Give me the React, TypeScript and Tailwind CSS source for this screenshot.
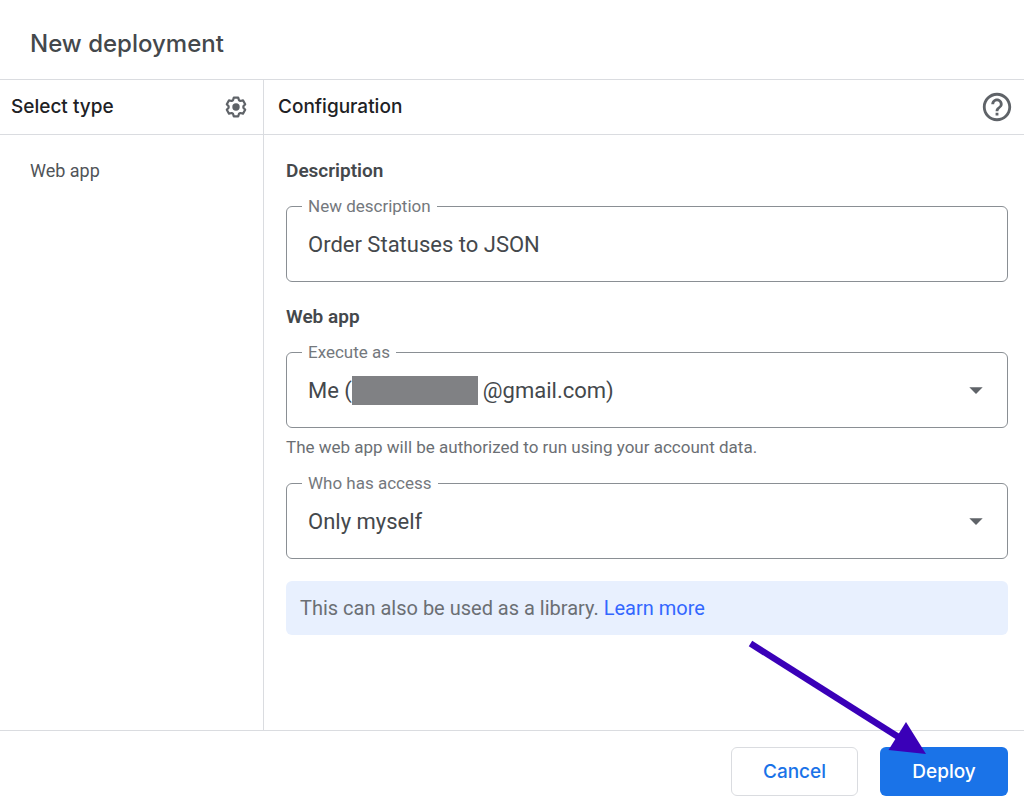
import { useState } from 'react';
import type { ReactNode } from 'react';
import { MdArrowDropDown, MdHelpOutline } from 'react-icons/md';

const account = `Me (${'\u00a0'.repeat(24)}@gmail.com)`;

interface FieldProps {
  id: string;
  label: string;
  children: ReactNode;
}

function Field({ id, label, children }: FieldProps) {
  return (
    <div className="relative h-[76px]">
      {children}
      <label htmlFor={id} className="absolute left-4 -top-3 bg-white px-1.5 text-[17px] leading-6 text-[#74787d]">
        {label}
      </label>
    </div>
  );
}

interface SelectFieldProps {
  id: string;
  label: string;
  options: string[];
  redacted?: boolean;
}

function SelectField({ id, label, options, redacted }: SelectFieldProps) {
  const [value, setValue] = useState(options[0]);

  return (
    <Field id={id} label={label}>
      <select
        id={id}
        value={value}
        onChange={(e) => setValue(e.target.value)}
        className="w-full h-full appearance-none rounded-md border border-[#8a8f94] bg-white px-[21px] text-[22px] text-[#44484c]"
      >
        {options.map((option) => (
          <option key={option}>{option}</option>
        ))}
      </select>
      {redacted && value === options[0] && (
        <span className="absolute left-[66px] top-6 h-[29px] w-[126px] bg-[#808184] pointer-events-none" />
      )}
      <MdArrowDropDown className="absolute right-4 top-[22px] w-8 h-8 text-[#5f6368] pointer-events-none" />
    </Field>
  );
}

function GearIcon() {
  return (
    <svg viewBox="-12 -12 24 24" className="w-6 h-6" aria-hidden="true">
      <path
        d="M-3-6.800-2.200-9.400H2.200L3-6.800 4.400-6 7-6.600 9.200-2.800 7.400-.8V.8L9.200 2.800 7 6.600 4.400 6 3 6.800 2.200 9.400H-2.200L-3 6.800-4.400 6-7 6.600-9.200 2.800-7.400.8V-.8L-9.200-2.800-7-6.600-4.400-6Z"
        fill="none"
        stroke="currentColor"
        strokeWidth="2.2"
        strokeLinejoin="round"
      />
      <circle r="3.7" fill="currentColor" />
    </svg>
  );
}

function PointerArrow() {
  return (
    <svg
      viewBox="0 0 178 114"
      className="absolute right-[82px] bottom-[42px] w-[178px] h-[114px] pointer-events-none"
      aria-hidden="true"
    >
      <path d="M2.5 3.5 152 98" stroke="#3a00b8" strokeWidth="6.5" />
      <path d="M158 82 178 114 140.500 110Z" fill="#3a00b8" />
    </svg>
  );
}

export default function App() {
  const [description, setDescription] = useState('Order Statuses to JSON');

  return (
    <div className="min-h-screen flex flex-col bg-white font-[Roboto,sans-serif] text-[#44484c]">
      <header className="border-b border-[#dadce0] px-[30px] pt-7 pb-[19px]">
        <h1 className="font-[Inter,sans-serif] text-2xl font-medium">New deployment</h1>
      </header>

      <div className="flex-1 flex">
        <aside className="w-[264px] shrink-0 border-r border-[#dadce0]">
          <div className="h-[55px] flex items-center justify-between border-b border-[#dadce0] pl-[11px] pr-[15px]">
            <h2 className="font-[Inter,sans-serif] text-[19px] font-medium text-[#202124]">Select type</h2>
            <button type="button" aria-label="Settings" className="text-[#5f6368]">
              <GearIcon />
            </button>
          </div>
          <p className="px-[30px] pt-6 text-lg leading-6 text-[#505458]">Web app</p>
        </aside>

        <main className="flex-1 min-w-0">
          <div className="h-[55px] flex items-center justify-between border-b border-[#dadce0] pl-[14px] pr-[10px]">
            <h2 className="font-[Inter,sans-serif] text-[19px] font-medium text-[#202124]">Configuration</h2>
            <button type="button" aria-label="Help" className="text-[#5f6368]">
              <MdHelpOutline className="w-[34px] h-[34px]" />
            </button>
          </div>

          <div className="pl-[22px] pr-4 pt-6">
            <h3 className="mb-[23px] text-[19px] leading-6 font-semibold">Description</h3>
            <Field id="description" label="New description">
              <input
                id="description"
                type="text"
                value={description}
                onChange={(e) => setDescription(e.target.value)}
                className="w-full h-full rounded-md border border-[#8a8f94] px-[21px] text-[22px]"
              />
            </Field>

            <h3 className="my-[23px] text-[19px] leading-6 font-semibold">Web app</h3>
            <SelectField
              id="execute-as"
              label="Execute as"
              options={[account, 'User accessing the web app']}
              redacted
            />
            <p className="mt-[7px] mb-6 text-[17px] leading-6 text-[#6b6f74]">
              The web app will be authorized to run using your account data.
            </p>
            <SelectField
              id="access"
              label="Who has access"
              options={['Only myself', 'Anyone with Google account', 'Anyone']}
            />

            <p className="mt-[22px] rounded-md bg-[#e8f0fe] px-[14px] py-[15px] text-xl leading-6 text-[#6b6f74]">
              This can also be used as a library.{' '}
              <a href="#" className="text-[#3367ff]">
                Learn more
              </a>
            </p>
          </div>
        </main>
      </div>

      <footer className="flex justify-end gap-[22px] border-t border-[#dadce0] px-4 pt-4 pb-[11px] font-[Inter,sans-serif] text-[19px] font-medium">
        <button type="button" className="w-[127px] h-[49px] rounded-md border border-[#dadce0] pt-0.5 text-[#1a73e8]">
          Cancel
        </button>
        <div className="relative">
          <button type="button" className="w-32 h-[49px] rounded-md bg-[#1a73e8] pt-0.5 text-white">
            Deploy
          </button>
          <PointerArrow />
        </div>
      </footer>
    </div>
  );
}
